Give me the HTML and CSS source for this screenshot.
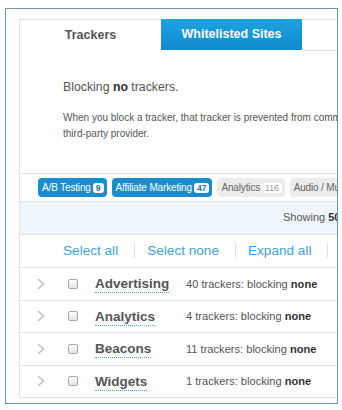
FILE: index.html
```html
<!DOCTYPE html>
<html>
<head>
<meta charset="utf-8">
<link rel="stylesheet" href="styles.css">
</head>
<body>
<div class="frame">
  <div class="panel">
    <div class="tabs">
      <div class="tab">Trackers</div>
      <div class="tab tab-active">Whitelisted Sites</div>
      <div class="tab-fill"></div>
    </div>
    <div class="intro">
      <p class="status">Blocking <b>no</b> trackers.</p>
      <p class="desc">When you block a tracker, that tracker is prevented from communicating with a<br>third-party provider.</p>
    </div>
    <div class="tags">
      <span class="pill pill-on">A/B Testing <span class="badge">9</span></span>
      <span class="pill pill-on">Affiliate Marketing <span class="badge">47</span></span>
      <span class="pill">Analytics <span class="badge">116</span></span>
      <span class="pill">Audio / Music Player <span class="badge">12</span></span>
    </div>
    <div class="showing">Showing <b>50</b> of 1,024 trackers</div>
    <div class="actions">
      <span class="act">Select all</span><span class="sep"></span>
      <span class="act">Select none</span><span class="sep"></span>
      <span class="act">Expand all</span><span class="sep"></span>
      <span class="act">Collapse all</span>
    </div>
    <div class="row">
      <svg class="chev" width="8" height="12" viewBox="0 0 8 12"><path d="M1 1 L6.5 6 L1 11" fill="none" stroke="#bdbdbd" stroke-width="1.4"/></svg>
      <span class="cb"></span>
      <span class="name-col"><span class="name">Advertising</span></span>
      <span class="count">40 trackers: blocking <b>none</b></span>
    </div>
    <div class="row">
      <svg class="chev" width="8" height="12" viewBox="0 0 8 12"><path d="M1 1 L6.5 6 L1 11" fill="none" stroke="#bdbdbd" stroke-width="1.4"/></svg>
      <span class="cb"></span>
      <span class="name-col"><span class="name">Analytics</span></span>
      <span class="count">4 trackers: blocking <b>none</b></span>
    </div>
    <div class="row">
      <svg class="chev" width="8" height="12" viewBox="0 0 8 12"><path d="M1 1 L6.5 6 L1 11" fill="none" stroke="#bdbdbd" stroke-width="1.4"/></svg>
      <span class="cb"></span>
      <span class="name-col"><span class="name">Beacons</span></span>
      <span class="count">11 trackers: blocking <b>none</b></span>
    </div>
    <div class="row">
      <svg class="chev" width="8" height="12" viewBox="0 0 8 12"><path d="M1 1 L6.5 6 L1 11" fill="none" stroke="#bdbdbd" stroke-width="1.4"/></svg>
      <span class="cb"></span>
      <span class="name-col"><span class="name">Widgets</span></span>
      <span class="count">1 trackers: blocking <b>none</b></span>
    </div>
  </div>
</div>
</body>
</html>
```
FILE: styles.css
```css
* { box-sizing: border-box; }
html, body { margin: 0; padding: 0; background: #fff; }
body { font-family: "Liberation Sans", Arial, sans-serif; color: #555; }

.frame {
  margin: 8px 0 0 5px;
  width: 333px;
  height: 396px;
  border: 1px solid #6d98a4;
  overflow: hidden;
  padding: 10px 0 0 13px;
}

.panel {
  width: 560px;
  border-top: 1px solid #e2e2e2;
  border-left: 1px solid #e2e2e2;
}

.tabs { display: flex; height: 31px; }
.tab {
  width: 141px;
  height: 30px;
  display: flex;
  align-items: center;
  justify-content: center;
  font-size: 12.5px;
  font-weight: bold;
  color: #555;
}
.tab-active {
  margin-top: -1px;
  height: 31px;
  color: #fff;
  background: linear-gradient(#1ea2de, #0f8ccf);
  padding-bottom: 2px;
}
.tab-fill { flex: 1; height: 31px; border-bottom: 1px solid #e2e2e2; }

.intro { padding: 28px 0 31px 43px; }
.status { margin: 0; font-size: 12.3px; line-height: 16px; color: #555; }
.status b { color: #333; }
.desc { margin: 15px 0 0; font-size: 10px; line-height: 16px; color: #555; white-space: nowrap; }

.tags {
  display: flex;
  gap: 5px;
  padding: 4px 0 4px 18px;
  border-top: 1px solid #e2e2e2;
  border-bottom: 1px solid #e2e2e2;
  white-space: nowrap;
}
.pill {
  display: inline-flex;
  align-items: center;
  gap: 2px;
  height: 19px;
  padding: 0 3px 0 4px;
  border-radius: 4px;
  font-size: 10px;
  letter-spacing: -0.15px;
  background: #ececec;
  color: #666;
}
.pill-on { background: #1b8dcf; color: #fff; }
.badge {
  display: inline-block;
  font-size: 8.5px;
  line-height: 10px;
  padding: 0 3px;
  border-radius: 3px;
  background: #fff;
  color: #999;
  letter-spacing: 0;
}
.pill-on .badge { color: #1b6fa3; font-weight: bold; }

.showing {
  height: 33px;
  background: #eef5fb;
  border-bottom: 1px solid #e2e2e2;
  display: flex;
  align-items: center;
  padding-left: 263px;
  padding-bottom: 2px;
  font-size: 11px;
  color: #555;
  white-space: nowrap;
}
.showing b { color: #333; margin-left: 3px; margin-right: 3px; }

.actions {
  height: 33px;
  display: flex;
  align-items: center;
  padding-left: 31px;
  border-bottom: 1px solid #e2e2e2;
  white-space: nowrap;
  padding-bottom: 1px;
}
.act { font-size: 13.6px; color: #41a3d8; padding: 0 16px 0 12px; }
.sep { width: 1px; height: 15px; background: #e0e0e0; }

.row {
  height: 32.5px;
  display: flex;
  align-items: center;
  border-bottom: 1px solid #e2e2e2;
  white-space: nowrap;
}
.chev { margin-left: 17px; flex: none; }
.cb {
  width: 10px;
  height: 10px;
  margin-left: 23px;
  border: 1px solid #a8a8a8;
  border-radius: 2px;
  background: linear-gradient(#fdfdfd, #e4e4e4);
  flex: none;
}
.name-col { width: 91px; margin-left: 17px; flex: none; }
.name {
  font-size: 13.5px;
  font-weight: bold;
  color: #555;
  line-height: 16px;
  border-bottom: 1px dotted #4fa6d8;
  display: inline-block;
}
.count { font-size: 11.1px; color: #555; }
.count b { color: #333; }
```
